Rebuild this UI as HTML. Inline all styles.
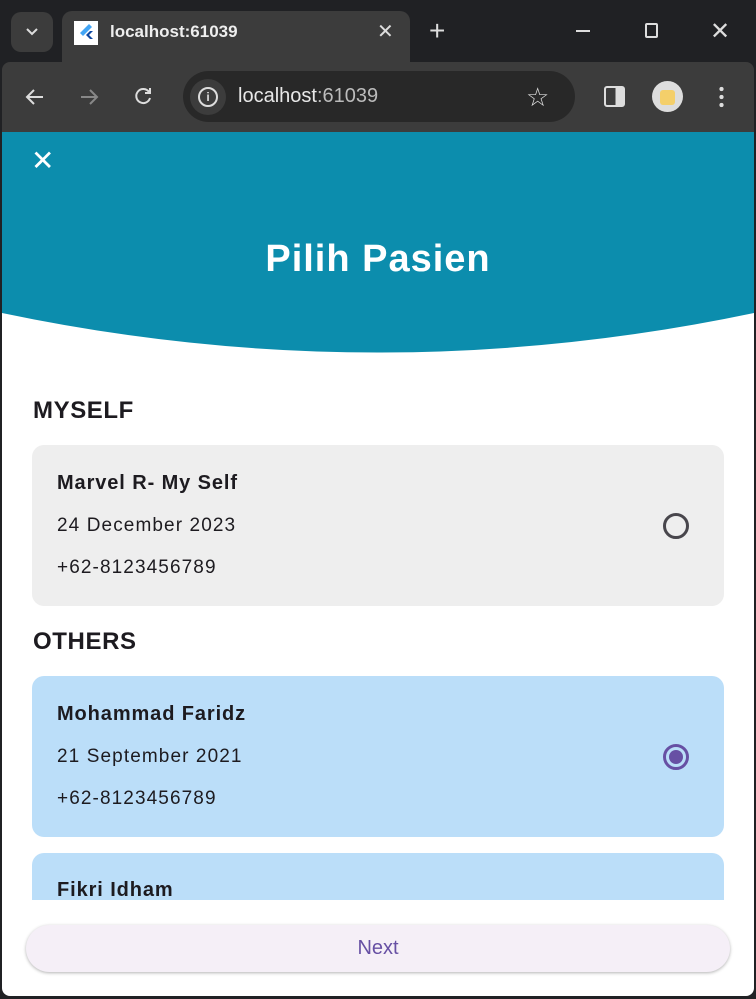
<!DOCTYPE html>
<html><head><style>
*{margin:0;padding:0;box-sizing:border-box}
body{width:756px;height:999px;background:#202124;font-family:"Liberation Sans",sans-serif;position:relative;overflow:hidden}
.abs{position:absolute}
.tab{left:62px;top:11px;width:348px;height:52px;background:#3c3c3c;border-radius:10px 10px 0 0}
.bar{left:2px;top:62px;width:752px;height:70px;background:#3c3c3c;border-radius:8px 8px 0 0}
.omni{left:183px;top:71px;width:392px;height:51px;background:#282828;border-radius:26px}
.page{left:2px;top:132px;width:752px;height:864px;background:#fff;border-radius:0 0 8px 8px;overflow:hidden}
.h{font-weight:bold;color:#1d1b20;font-size:24px;letter-spacing:0.6px;position:absolute;left:31px}
.card{position:absolute;left:30px;width:692px;border-radius:12px}
.n{position:absolute;left:25px;font-weight:bold;font-size:20px;letter-spacing:0.9px;color:#1d1b20}
.t{position:absolute;left:25px;font-size:19px;letter-spacing:1.1px;color:#1d1b20}
.radio{position:absolute;left:631px;width:26px;height:26px;border-radius:50%;border:3px solid #48464c}
</style></head><body>
<div class="abs" style="left:11px;top:12px;width:42px;height:40px;background:#3c3c3c;border-radius:10px"></div>
<svg class="abs" style="left:24px;top:26px" width="16" height="12"><path d="M3 3l5 5 5-5" stroke="#ddd" stroke-width="2" fill="none"/></svg>
<div class="abs tab"></div>
<div class="abs" style="left:74px;top:21px;width:24px;height:24px;background:#fff"></div>
<svg class="abs" style="left:76px;top:22px" width="20" height="22"><path d="M13 2L4 11l3 3L16 5z" fill="#42a5f5"/><path d="M10 13l4 4h3l-4-4 4-4h-3z" fill="#0d47a1"/></svg>
<div class="abs" style="left:110px;top:22px;color:#eee;font-size:17px;font-weight:bold">localhost:61039</div>
<div class="abs" style="left:377px;top:19px;color:#ddd;font-size:20px">✕</div>
<div class="abs" style="left:429px;top:15px;color:#ddd;font-size:28px">+</div>
<div class="abs" style="left:576px;top:30px;width:14px;height:2px;background:#ddd"></div>
<div class="abs" style="left:645px;top:23px;width:13px;height:15px;border:2px solid #ddd;border-radius:2px"></div>
<div class="abs" style="left:710px;top:17px;color:#ddd;font-size:24px">✕</div>
<div class="abs bar"></div>
<svg class="abs" style="left:24px;top:86px" width="22" height="22"><path d="M19 11H4M10 4l-7 7 7 7" stroke="#ddd" stroke-width="2" fill="none"/></svg>
<svg class="abs" style="left:78px;top:86px" width="22" height="22"><path d="M3 11h15M12 4l7 7-7 7" stroke="#888" stroke-width="2" fill="none"/></svg>
<svg class="abs" style="left:132px;top:85px" width="22" height="22"><path d="M17 7A7 7 0 1 0 18 13M18 3v5h-5" stroke="#ddd" stroke-width="2" fill="none"/></svg>
<div class="abs omni"></div>
<div class="abs" style="left:190px;top:79px;width:36px;height:36px;border-radius:50%;background:#3c3c3c"></div>
<div class="abs" style="left:198px;top:87px;width:20px;height:20px;border-radius:50%;border:2px solid #ddd;color:#ddd;font-size:12px;text-align:center;line-height:16px;font-weight:bold">i</div>
<div class="abs" style="left:238px;top:85px;color:#e8e8e8;font-size:20px">localhost<span style="color:#bbb">:61039</span></div>
<div class="abs" style="left:526px;top:82px;color:#ddd;font-size:26px">☆</div>
<div class="abs" style="left:604px;top:86px;width:21px;height:21px;border:2px solid #ddd;border-radius:3px;background:linear-gradient(90deg,transparent 55%,#ddd 55%)"></div>
<div class="abs" style="left:652px;top:81px;width:31px;height:31px;border-radius:50%;background:#ddd"></div>
<div class="abs" style="left:660px;top:90px;width:15px;height:15px;border-radius:3px;background:#f4cf6a"></div>
<div class="abs" style="left:719px;top:85px;width:5px;height:24px;background:radial-gradient(circle,#ddd 2px,transparent 2.3px) 0 0/5px 8px"></div>
<div class="abs page">
<svg class="abs" style="left:0;top:0" width="752" height="222"><path d="M0 0H752V181Q376 260 0 181Z" fill="#0c8dad"/></svg>
<div class="abs" style="left:29px;top:12px;color:#fff;font-size:28px">✕</div>
<div class="abs" style="left:0;width:752px;top:106px;text-align:center;color:#fff;font-weight:bold;font-size:38px;letter-spacing:1px">Pilih Pasien</div>
<div class="h" style="top:265px">MYSELF</div>
<div class="card" style="top:313px;height:161px;background:#eeeeee">
<div class="n" style="top:27px">Marvel R- My Self</div>
<div class="t" style="top:70px">24 December 2023</div>
<div class="t" style="top:112px">+62-8123456789</div>
<div class="radio" style="top:68px"></div>
</div>
<div class="h" style="top:496px">OTHERS</div>
<div class="card" style="top:544px;height:161px;background:#bbdef9">
<div class="n" style="top:27px">Mohammad Faridz</div>
<div class="t" style="top:70px">21 September 2021</div>
<div class="t" style="top:112px">+62-8123456789</div>
<div class="radio" style="top:68px;border-color:#6750a4"><div style="margin:3px;width:14px;height:14px;border-radius:50%;background:#6750a4"></div></div>
</div>
<div class="card" style="top:721px;height:47px;background:#bbdef9;border-radius:12px 12px 0 0">
<div class="n" style="top:26px">Fikri Idham</div>
</div>
<div class="abs" style="left:24px;top:793px;width:704px;height:47px;border-radius:24px;background:#f5eff7;box-shadow:0 1px 3px rgba(0,0,0,.3);text-align:center;line-height:47px;color:#6750a4;font-size:20px">Next</div>
</div>
</body></html>
